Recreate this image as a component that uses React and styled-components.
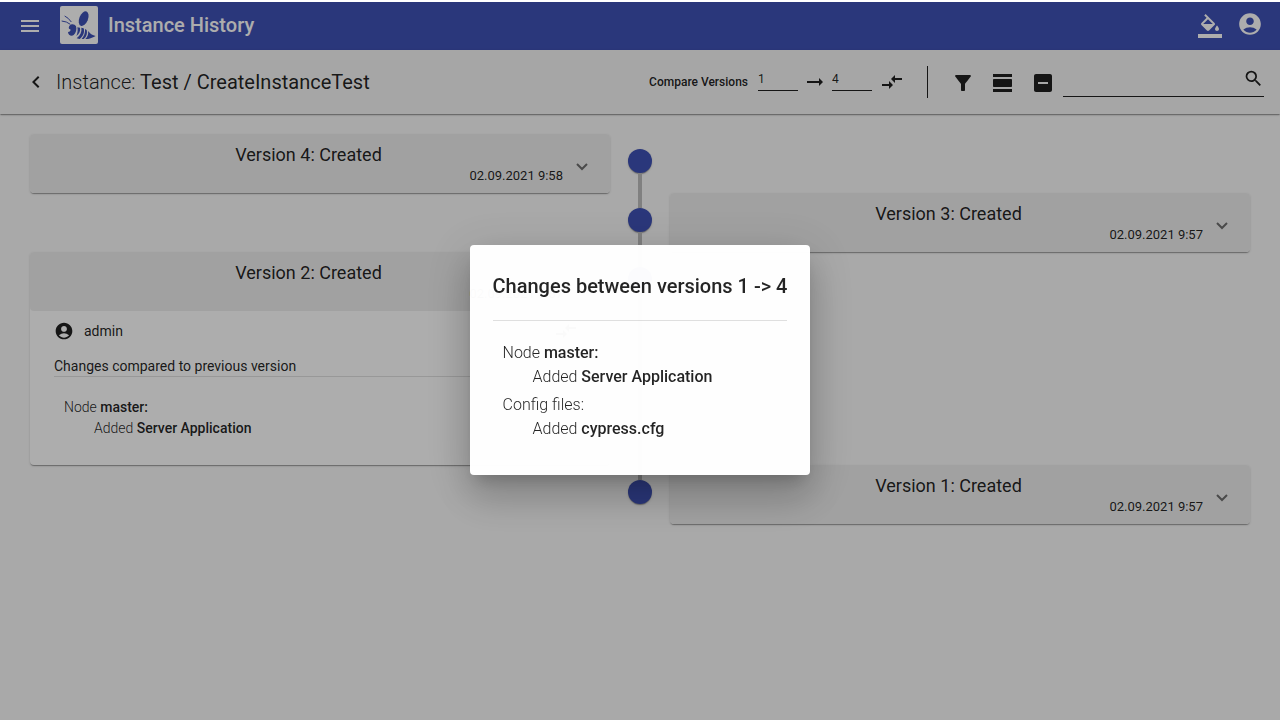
import React from "react";
import styled, { createGlobalStyle } from "styled-components";
import {
  MdMenu,
  MdAccountCircle,
  MdChevronLeft,
  MdCompareArrows,
  MdFilterAlt,
  MdIndeterminateCheckBox,
  MdSearch,
} from "react-icons/md";

const GlobalStyle = createGlobalStyle`
  *, *::before, *::after { box-sizing: border-box; }
  body {
    margin: 0;
    background: #fafafa;
    color: rgba(0, 0, 0, 0.87);
    font: 400 14px/20px Roboto, "Liberation Sans", sans-serif;
  }
  h1, h2, h3, p, ul { margin: 0; padding: 0; }
  button, input { font-family: inherit; color: inherit; }
`;

const elevation =
  "0 2px 1px -1px rgba(0,0,0,.2), 0 1px 1px 0 rgba(0,0,0,.14), 0 1px 3px 0 rgba(0,0,0,.12)";

const Page = styled.div`
  min-height: 100vh;
  border-top: 2px solid #fff;
`;

const Header = styled.header`
  display: flex;
  align-items: center;
  height: 48px;
  padding: 0 10px;
  background: #3f51b5;
  color: #fff;
`;

const IconButton = styled.button`
  display: inline-flex;
  align-items: center;
  justify-content: center;
  flex: none;
  width: 40px;
  height: 40px;
  padding: ${(p) => (p.$raised ? "0 0 4px" : "0")};
  border: 0;
  background: none;
  font-size: ${(p) => p.$size || 24}px;
  cursor: pointer;
`;

const Logo = styled.svg`
  width: 38px;
  height: 38px;
  margin: 0 10px 2px;
  border-radius: 2px;
  background: #fff;
`;

const AppTitle = styled.h1`
  flex: 1;
  padding-bottom: 2px;
  font-size: 20px;
  line-height: 24px;
  font-weight: 500;
`;

const Toolbar = styled.div`
  display: flex;
  align-items: center;
  height: 64px;
  padding: 0 16px;
  background: #f5f5f5;
  box-shadow: ${elevation};
`;

const InstanceTitle = styled.h2`
  flex: 1;
  font-size: 20px;
  line-height: 24px;
  font-weight: 400;
`;

const Light = styled.span`
  font-weight: 300;
`;

const Compare = styled.div`
  display: flex;
  align-items: center;
`;

const CompareLabel = styled.span`
  margin-right: 10px;
  font-size: 12px;
  font-weight: 500;
`;

const VersionInput = styled.input`
  width: 40px;
  height: 24px;
  padding: 0;
  border: 0;
  border-bottom: 1px solid currentColor;
  border-radius: 0;
  background: none;
  font-size: 12px;
  outline: 0;
  margin-bottom: 6px;
`;

const Arrow = styled.svg`
  width: 24px;
  height: 24px;
  margin: 0 5px;
`;

const Divider = styled.span`
  width: 1px;
  height: 32px;
  margin: 0 15px;
  background: currentColor;
`;

const Tools = styled.div`
  display: flex;
  padding-top: 2px;
`;

const SearchBox = styled.label`
  display: flex;
  align-items: center;
  width: 201px;
  height: 36px;
  border-bottom: 1px solid currentColor;
  font-size: 21px;
  margin-bottom: 7px;
`;

const SearchInput = styled.input`
  flex: 1;
  min-width: 0;
  border: 0;
  outline: 0;
  background: none;
  font-size: 14px;
`;

const Timeline = styled.main`
  padding: 20px 30px;
`;

const Entry = styled.section`
  display: grid;
  grid-template-columns: minmax(0, 1fr) 60px minmax(0, 1fr);
`;

const Card = styled.article`
  grid-column: ${(p) => (p.$side === "left" ? 1 : 3)};
  grid-row: 1;
  border-radius: 4px;
  background: #fff;
  box-shadow: ${elevation};
`;

const Rail = styled.div`
  grid-column: 2;
  grid-row: 1;
  display: flex;
  flex-direction: column;
  align-items: center;
`;

const RailLine = styled.span`
  width: 4px;
  ${(p) => (p.$top ? "height: 15px;" : "flex: 1;")}
  background: ${(p) => (p.$hidden ? "transparent" : "#bdbdbd")};
`;

const Dot = styled.span`
  width: 24px;
  height: 24px;
  border-radius: 50%;
  background: #3f51b5;
  box-shadow: ${elevation};
`;

const CardHeader = styled.button`
  display: flex;
  align-items: center;
  width: 100%;
  height: 59px;
  padding: 0 22px 0 24px;
  border: 0;
  border-radius: 4px;
  background: #eee;
  cursor: pointer;
`;

const CardText = styled.span`
  display: flex;
  flex-direction: column;
  flex: 1;
  margin-right: 13px;
`;

const CardTitle = styled.span`
  font-size: 18px;
  line-height: 24px;
`;

const CardDate = styled.span`
  align-self: flex-end;
  font-size: 13px;
  line-height: 18px;
`;

const Chevron = styled.svg`
  width: 12px;
  height: 12px;
  margin-top: 6px;
  fill: none;
  stroke: rgba(0, 0, 0, 0.54);
  stroke-width: 2;
`;

const CardBody = styled.div`
  padding: 0 24px 26px;
`;

const UserRow = styled.div`
  display: flex;
  align-items: center;
  gap: 10px;
  height: 40px;
  font-size: 14px;
`;

const UserName = styled.span`
  flex: 1;
`;

const ChangesHeading = styled.h3`
  padding-top: 5px;
  border-bottom: 1px solid rgba(0, 0, 0, 0.12);
  font-size: 14px;
  line-height: 20px;
  font-weight: 400;
`;

const ChangeList = styled.ul`
  padding: 20px 10px 0;
  list-style: none;
  font-size: ${(p) => (p.$large ? 16 : 14)}px;
  line-height: ${(p) => (p.$large ? 24 : 21)}px;
  font-weight: 300;

  ul {
    padding-left: 30px;
    list-style: none;
  }

  > li + li {
    margin-top: 4px;
  }

  strong {
    font-weight: 500;
  }
`;

const Backdrop = styled.div`
  position: fixed;
  inset: 2px 0 0;
  background: rgba(0, 0, 0, 0.32);
`;

const Overlay = styled.div`
  position: fixed;
  inset: 0;
  display: flex;
  align-items: center;
  justify-content: center;
`;

const Dialog = styled.div`
  padding: 25px 23px 34px;
  border-radius: 4px;
  background: #fff;
  opacity: 0.98;
  box-shadow: 0 11px 15px -7px rgba(0, 0, 0, 0.2),
    0 24px 38px 3px rgba(0, 0, 0, 0.14), 0 9px 46px 8px rgba(0, 0, 0, 0.12);
`;

const DialogTitle = styled.h2`
  padding-bottom: 18px;
  border-bottom: 1px solid rgba(0, 0, 0, 0.12);
  font-size: 20px;
  line-height: 32px;
  font-weight: 500;
`;

function Bee() {
  return (
    <Logo viewBox="0 0 114 114" role="img" aria-label="Bee logo" fill="#3f51b5">
      <ellipse cx="71" cy="38" rx="13" ry="23" transform="rotate(22 71 38)" />
      <path
        d="M5 45Q20 46 31 55M14 30Q25 35 34 48"
        fill="none"
        stroke="#3f51b5"
        strokeWidth="3"
      />
      <path d="M28 60C33 52 44 53 48 61C51 70 48 81 41 87C34 92 24 87 24 78C30 78 33 74 31 70C26 70 25 64 28 60Z" />
      <path d="M52 64L60 65C62 74 58 84 49 90C53 81 54 72 52 64Z" />
      <path d="M64 65L71 67C75 79 69 92 59 99L50 97C61 88 66 78 64 65Z" />
      <path d="M75 69L80 72C83 84 78 94 71 99L65 99C72 91 76 81 75 69Z" />
      <path d="M84 75C90 81 94 87 107 90C99 94 92 98 84 99L76 99C83 92 86 85 84 75Z" />
    </Logo>
  );
}

function Glyph({ d }) {
  return (
    <svg viewBox="0 0 24 24" width="24" height="24" fill="currentColor" aria-hidden="true">
      <path d={d} />
    </svg>
  );
}

const FILL_ICON =
  "M16.56 8.94L7.62 0 6.21 1.41l2.38 2.38-5.15 5.15a1.49 1.49 0 0 0 0 2.12l5.5 5.5c.29.29.68.44 1.06.44s.77-.15 1.06-.44l5.5-5.5c.59-.58.59-1.53 0-2.12zM5.21 10L10 5.21 14.79 10H5.21zM19 11.5s-2 2.17-2 3.5c0 1.1.9 2 2 2s2-.9 2-2c0-1.33-2-3.5-2-3.5zM0 20h24v4H0v-4z";
const VIEW_DAY_ICON =
  "M2 21h19v-3H2v3zM20 8H3c-.55 0-1 .45-1 1v6c0 .55.45 1 1 1h17c.55 0 1-.45 1-1V9c0-.55-.45-1-1-1zM2 3v3h19V3H2z";

const versions = [
  { id: 4, date: "02.09.2021 9:58", side: "left" },
  { id: 3, date: "02.09.2021 9:57", side: "right" },
  { id: 2, date: "02.09.2021 9:57", side: "left", open: true },
  { id: 1, date: "02.09.2021 9:57", side: "right" },
];

function NodeChange() {
  return (
    <li>
      Node <strong>master:</strong>
      <ul>
        <li>
          Added <strong>Server Application</strong>
        </li>
      </ul>
    </li>
  );
}

function VersionEntry({ version, first, last }) {
  return (
    <Entry>
      <Card $side={version.side}>
        <CardHeader type="button" aria-expanded={Boolean(version.open)}>
          <CardText>
            <CardTitle>Version {version.id}: Created</CardTitle>
            <CardDate>{version.date}</CardDate>
          </CardText>
          <Chevron viewBox="0 0 12 12" aria-hidden="true">
            <path d={version.open ? "M1 9l5-5 5 5" : "M1 3l5 5 5-5"} />
          </Chevron>
        </CardHeader>
        {version.open && (
          <CardBody>
            <UserRow>
              <MdAccountCircle size={20} />
              <UserName>admin</UserName>
              <IconButton type="button" aria-label="Compare with current">
                <MdCompareArrows />
              </IconButton>
            </UserRow>
            <ChangesHeading>Changes compared to previous version</ChangesHeading>
            <ChangeList>
              <NodeChange />
            </ChangeList>
          </CardBody>
        )}
      </Card>
      <Rail>
        <RailLine $top $hidden={first} />
        <Dot />
        <RailLine $hidden={last} />
      </Rail>
    </Entry>
  );
}

export default function App() {
  return (
    <>
      <GlobalStyle />
      <Page>
        <Header>
          <IconButton type="button" aria-label="Menu">
            <MdMenu />
          </IconButton>
          <Bee />
          <AppTitle>Instance History</AppTitle>
          <IconButton type="button" aria-label="Theme">
            <Glyph d={FILL_ICON} />
          </IconButton>
          <IconButton type="button" aria-label="Account" $size={26} $raised>
            <MdAccountCircle />
          </IconButton>
        </Header>
        <Toolbar>
          <IconButton type="button" aria-label="Back">
            <MdChevronLeft />
          </IconButton>
          <InstanceTitle>
            <Light>Instance:</Light> Test / CreateInstanceTest
          </InstanceTitle>
          <Compare>
            <CompareLabel>Compare Versions</CompareLabel>
            <VersionInput aria-label="From version" defaultValue="1" />
            <Arrow viewBox="0 0 24 24" fill="currentColor" aria-hidden="true">
              <path d="M16.01 11H4v2h12.01v3L20 12l-3.99-4z" />
            </Arrow>
            <VersionInput aria-label="To version" defaultValue="4" />
            <IconButton type="button" aria-label="Compare">
              <MdCompareArrows />
            </IconButton>
          </Compare>
          <Divider />
          <Tools>
            <IconButton type="button" aria-label="Filter">
              <MdFilterAlt />
            </IconButton>
            <IconButton type="button" aria-label="Expand all">
              <Glyph d={VIEW_DAY_ICON} />
            </IconButton>
            <IconButton type="button" aria-label="Collapse all">
              <MdIndeterminateCheckBox />
            </IconButton>
          </Tools>
          <SearchBox>
            <SearchInput type="text" aria-label="Search" />
            <MdSearch />
          </SearchBox>
        </Toolbar>
        <Timeline>
          {versions.map((v, i) => (
            <VersionEntry
              key={v.id}
              version={v}
              first={i === 0}
              last={i === versions.length - 1}
            />
          ))}
        </Timeline>
      </Page>
      <Backdrop />
      <Overlay>
        <Dialog role="dialog" aria-modal="true" aria-labelledby="changes-title">
          <DialogTitle id="changes-title">Changes between versions 1 -&gt; 4</DialogTitle>
          <ChangeList $large>
            <NodeChange />
            <li>
              Config files:
              <ul>
                <li>
                  Added <strong>cypress.cfg</strong>
                </li>
              </ul>
            </li>
          </ChangeList>
        </Dialog>
      </Overlay>
    </>
  );
}
